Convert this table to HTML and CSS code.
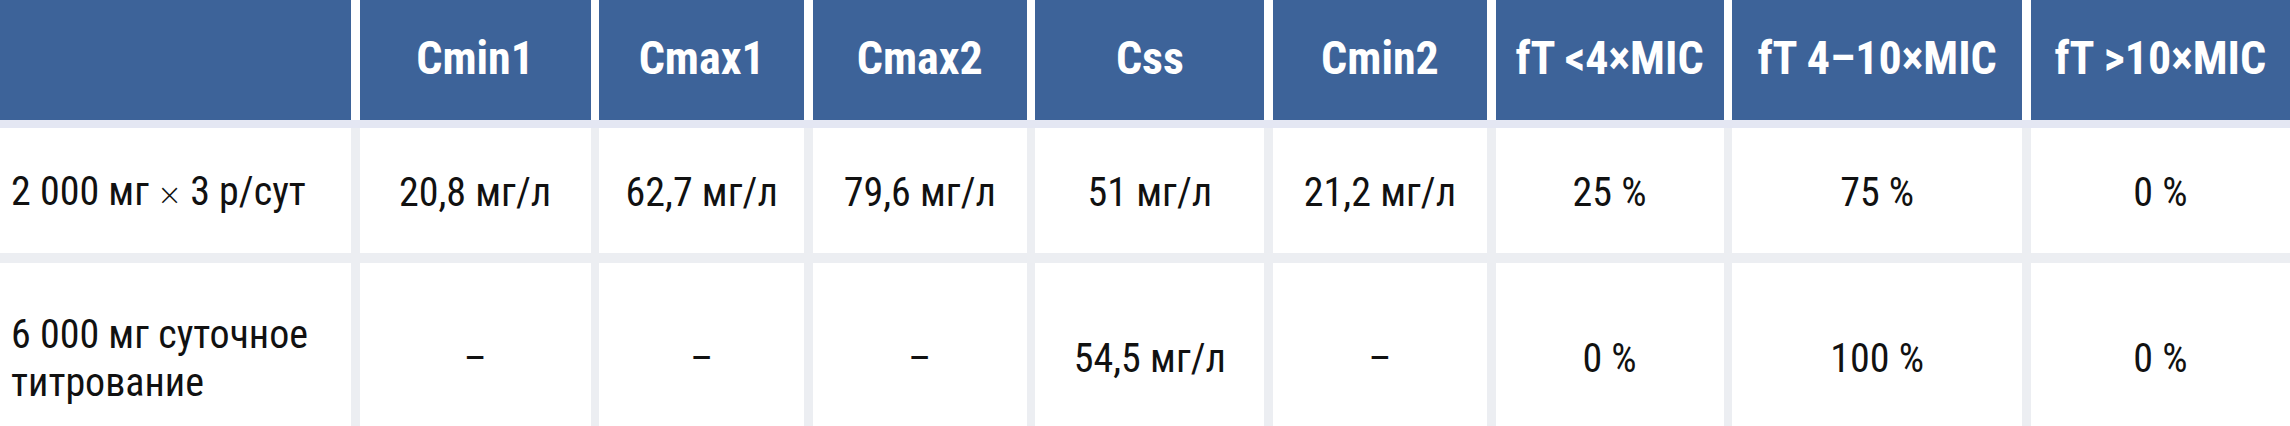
FILE: index.html
```html
<!DOCTYPE html>
<html lang="ru">
<head>
<meta charset="utf-8">
<title>Фармакокинетика</title>
<link rel="stylesheet" href="styles.css">
</head>
<body>
<div class="table">
  <div class="thead">
    <div class="th"></div>
    <div class="th">Cmin1</div>
    <div class="th">Cmax1</div>
    <div class="th">Cmax2</div>
    <div class="th">Css</div>
    <div class="th">Cmin2</div>
    <div class="th">fT &lt;4×MIC</div>
    <div class="th">fT 4–10×MIC</div>
    <div class="th">fT &gt;10×MIC</div>
  </div>
  <div class="tbody">
    <div class="td first row1"><span>2 000 мг<span class="times">×</span>3 р/сут</span></div>
    <div class="td row1">20,8 мг/л</div>
    <div class="td row1">62,7 мг/л</div>
    <div class="td row1">79,6 мг/л</div>
    <div class="td row1">51 мг/л</div>
    <div class="td row1">21,2 мг/л</div>
    <div class="td row1">25 %</div>
    <div class="td row1">75 %</div>
    <div class="td row1">0 %</div>
    <div class="td first row2"><span>6 000 мг суточное титрование</span></div>
    <div class="td row2">–</div>
    <div class="td row2">–</div>
    <div class="td row2">–</div>
    <div class="td row2">54,5 мг/л</div>
    <div class="td row2">–</div>
    <div class="td row2">0 %</div>
    <div class="td row2">100 %</div>
    <div class="td row2">0 %</div>
  </div>
</div>
</body>
</html>
```

FILE: styles.css
```css
html, body {
  margin: 0;
  padding: 0;
  background: #ffffff;
}

body {
  font-family: "Roboto Condensed", "Liberation Sans Narrow", "Arial Narrow", Roboto, "Liberation Sans", sans-serif;
  font-stretch: condensed;
  color: #111111;
}

.table {
  width: 2290px;
}

.thead,
.tbody {
  display: grid;
  grid-template-columns: 351px 231px 205px 214px 229px 214px 228px 290px 1fr;
  column-gap: 8.6px;
}

.thead {
  background: #ffffff;
}

.th {
  height: 120px;
  background: #3d6399;
  color: #ffffff;
  font-weight: 700;
  font-size: 46px;
  display: flex;
  align-items: center;
  justify-content: center;
  white-space: nowrap;
  padding-bottom: 4px;
  box-sizing: border-box;
}

.tbody {
  border-top: 8px solid #e4e7f3;
  background: #eceef2;
  row-gap: 10px;
}

.td {
  background: #ffffff;
  font-size: 40px;
  line-height: 48px;
  display: flex;
  align-items: center;
  justify-content: center;
  text-align: center;
  padding-top: 5px;
  box-sizing: border-box;
}

.td.first {
  justify-content: flex-start;
  text-align: left;
  padding-left: 11px;
}

.times {
  font-family: "DejaVu Sans", sans-serif;
  font-stretch: normal;
  font-weight: 300;
  font-size: 30px;
  padding: 0 8px;
}

.row1 {
  height: 125px;
}

.row2 {
  height: 184px;
  padding-top: 8px;
}
```
